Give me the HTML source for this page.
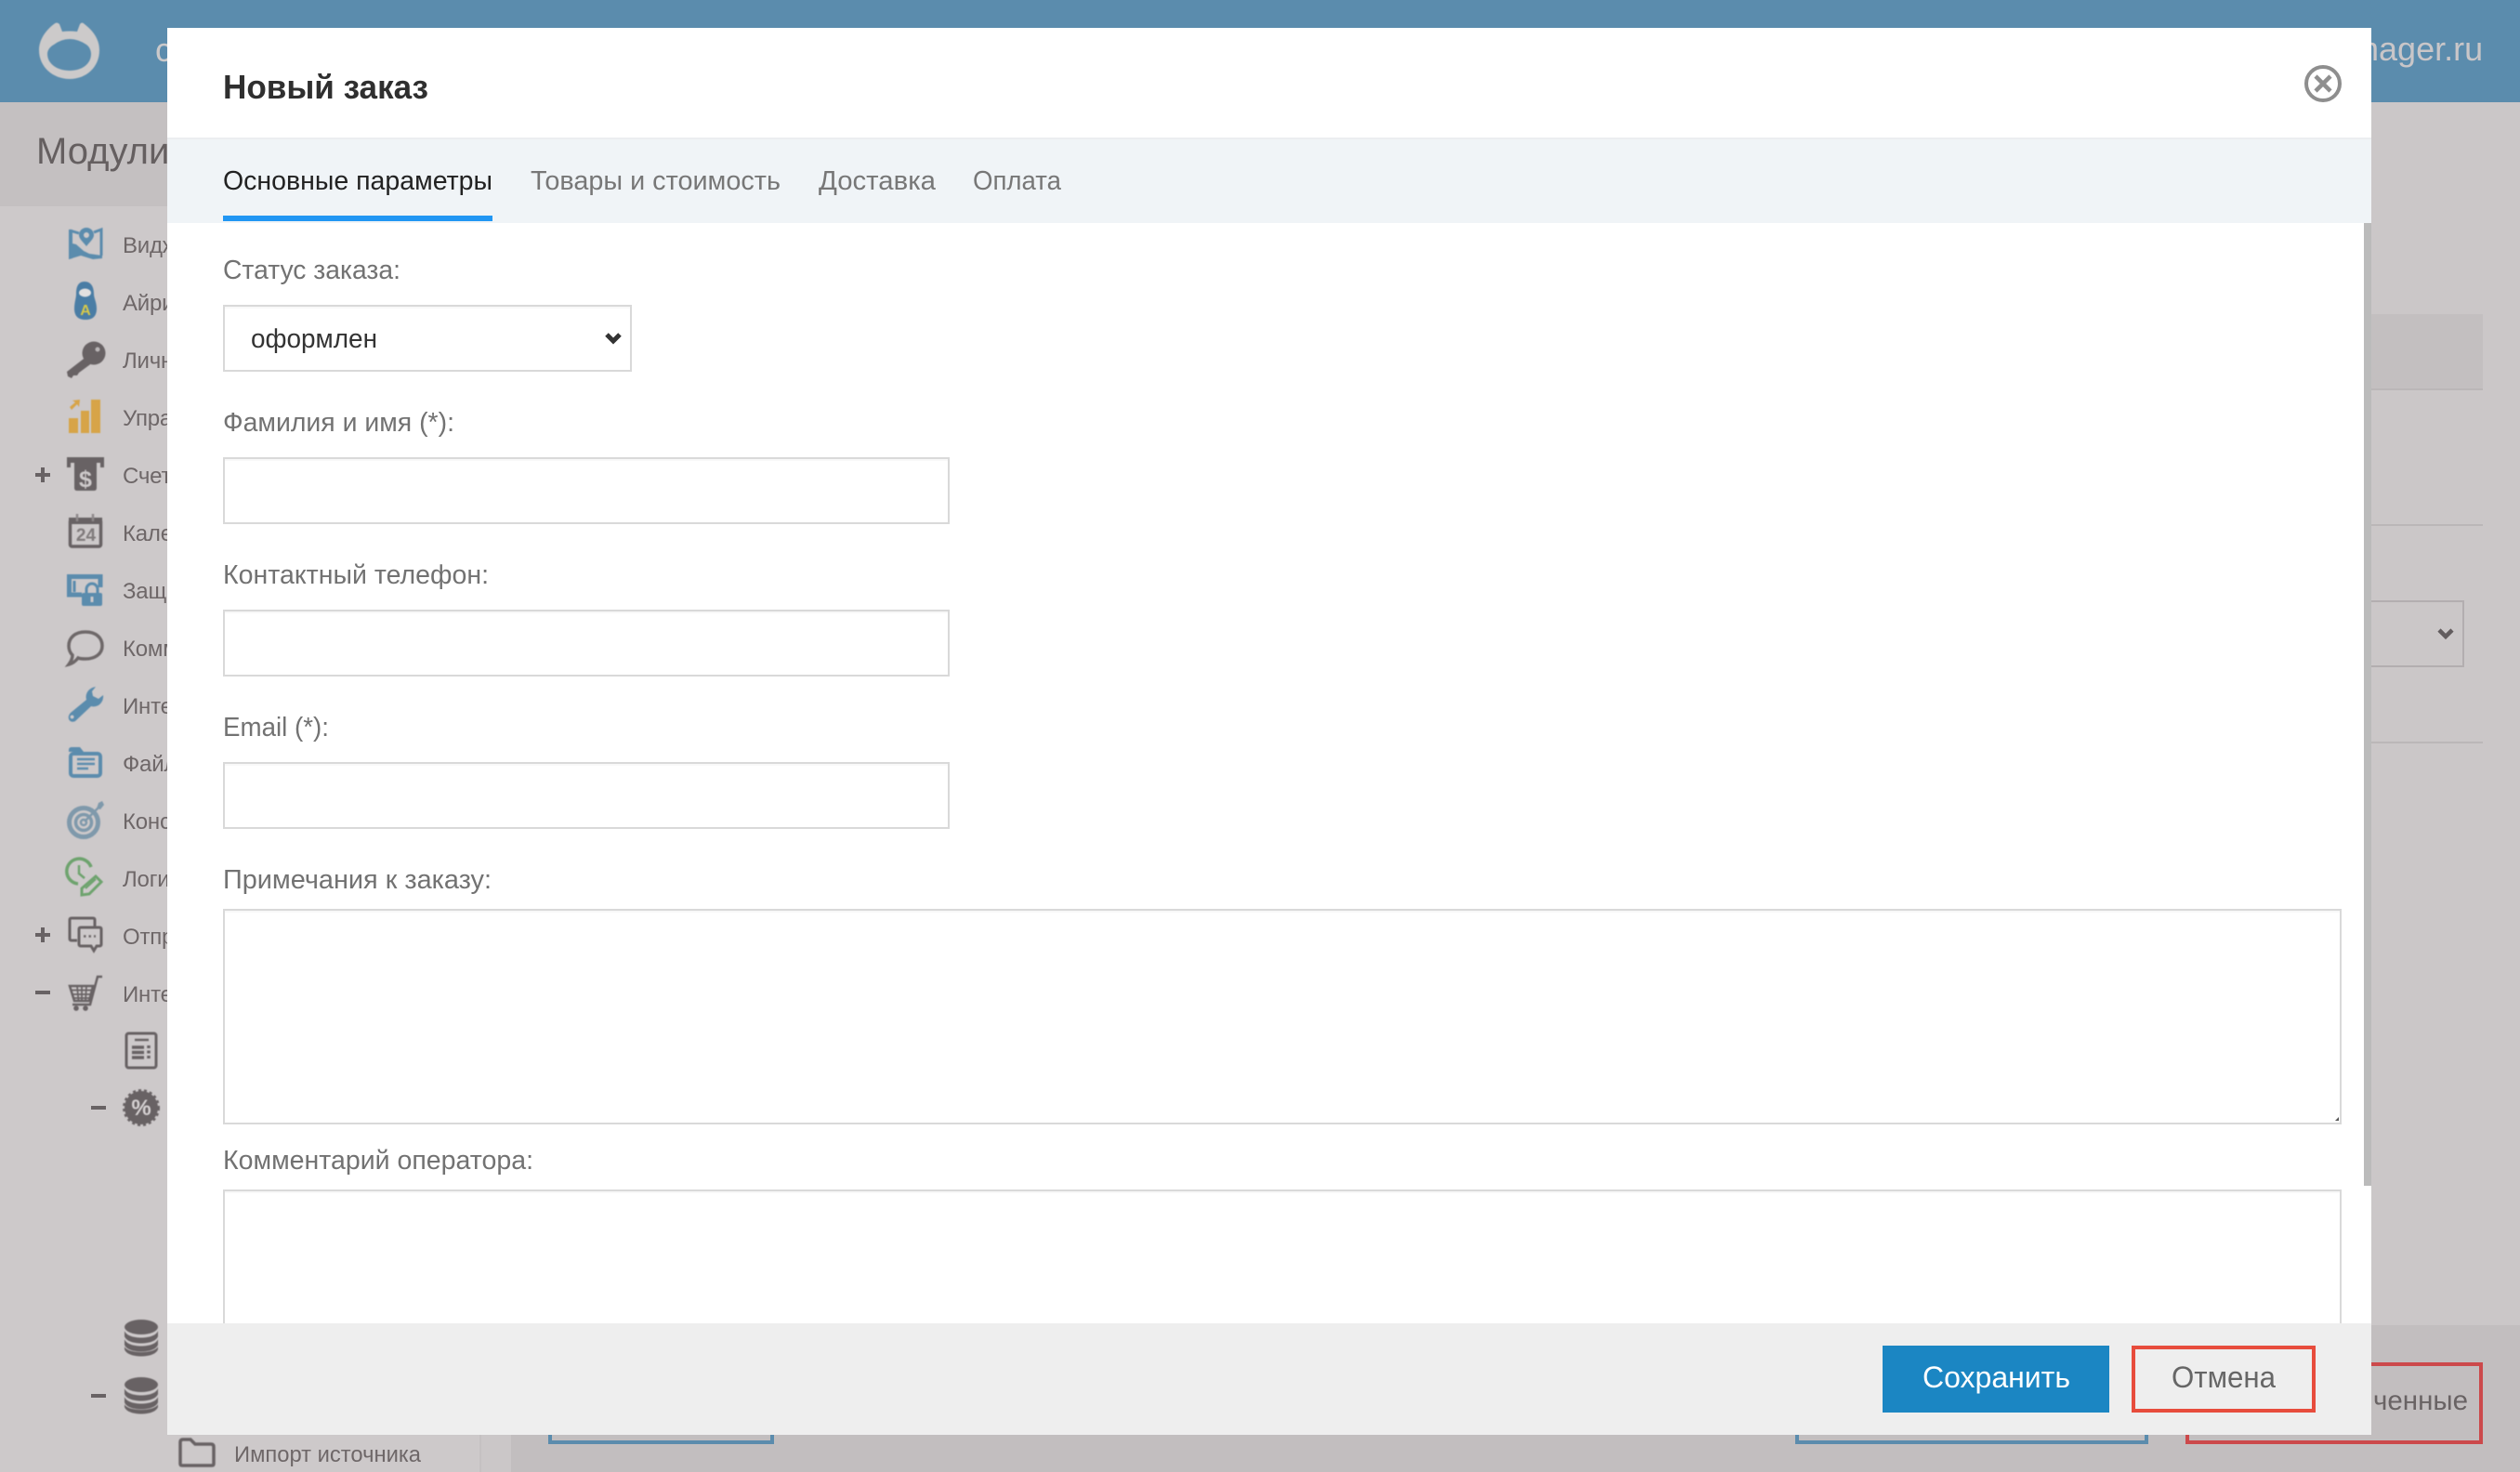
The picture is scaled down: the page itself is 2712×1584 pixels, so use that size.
<!DOCTYPE html>
<html lang="ru">
<head>
<meta charset="utf-8">
<title>Новый заказ</title>
<style>
html,body{margin:0;padding:0;width:2712px;height:1584px;overflow:hidden;background:#cbc7c8}
svg{display:block;position:absolute;left:0;top:0}
text{font-family:"Liberation Sans","Noto Sans CJK SC",sans-serif}
.side{font-size:24px;fill:#6e6768;letter-spacing:-.2px}
.lab{font-size:29px;fill:#727272}
.tab{font-size:29px;fill:#777}
.fld{fill:#fff;stroke:#d9d9d9;stroke-width:2}
.soft{filter:blur(.6px)}
</style>
</head>
<body>
<svg width="2712" height="1584" viewBox="0 0 2712 1584" xmlns="http://www.w3.org/2000/svg">
<!-- page background -->
<rect width="2712" height="1584" fill="#cbc7c8"/>
<rect width="2712" height="110" fill="#5b8cad"/>
<rect y="110" width="180" height="112" fill="#c4c0c1"/>
<rect x="0" y="222" width="517" height="1362" fill="#cdc9ca"/>
<rect x="550" y="1426" width="2162" height="158" fill="#c2bebf"/>
<rect x="516" y="1544" width="2" height="40" fill="#c5c1c2"/>

<!-- logo -->
<path class="soft" fill="#cccaca" fill-rule="evenodd" d="M42 54 C42 42 50 32 58 26 Q61 23 64 26 L67 34 Q75 33 83 34 L86 26 Q88 23 91 26 C100 33 107 42 107 54 C107 72 93 85 75 85 C57 85 42 72 42 54 Z M58 48 Q66 42 75 42 Q84 42 93 48 C96 50 98 54 98 58 C98 69 88 76 75 76 C62 76 51 69 51 58 C51 54 54 50 58 48 Z"/>
<text x="167" y="66" font-size="36" fill="#cbc9ca">с</text>
<text x="2490" y="65" font-size="36" fill="#c9c6c8">manager.ru</text>
<text x="39" y="176" font-size="40" fill="#655f60">Модули</text>

<!-- sidebar text -->
<text class="side" x="132" y="272">Виджеты</text>
<text class="side" x="132" y="334">Айрин</text>
<text class="side" x="132" y="396">Личный</text>
<text class="side" x="132" y="458">Управление</text>
<text class="side" x="132" y="520">Счета</text>
<text class="side" x="132" y="582">Календарь</text>
<text class="side" x="132" y="644">Защита</text>
<text class="side" x="132" y="706">Комментарии</text>
<text class="side" x="132" y="768">Интеграции</text>
<text class="side" x="132" y="830">Файлы</text>
<text class="side" x="132" y="892">Конструктор</text>
<text class="side" x="132" y="954">Логи</text>
<text class="side" x="132" y="1016">Отправка</text>
<text class="side" x="132" y="1078">Интернет</text>
<text x="252" y="1573" font-size="24" fill="#6e6768" textLength="201" lengthAdjust="spacingAndGlyphs">Импорт источника</text>

<g class="soft">
<!-- map -->
<path d="M75 248 L85 251 M101 250 L109 247 V275" fill="none" stroke="#5b8cad" stroke-width="3"/>
<path d="M74 247 H78 V278 L74 279 Z" fill="#5b8cad"/>
<path d="M74 261 L82 263 L90 270 L96 273 L110 275 V278 L100 279 L87 275 L74 279 Z" fill="#5b8cad"/>
<path fill-rule="evenodd" fill="#5b8cad" d="M93 245 C88 245 85 249 85 253 C85 257 90 261 93 265 C96 261 101 257 101 253 C101 249 98 245 93 245 Z M93 250 A3 3 0 1 1 93 256 A3 3 0 1 1 93 250 Z"/>
<!-- matryoshka -->
<path d="M91 303 C84 303 82 309 82 316 C82 321 80 325 80 332 C80 340 84 344 92 344 C100 344 104 340 104 332 C104 325 101 321 101 316 C101 309 98 303 91 303 Z" fill="#4a7da5"/>
<ellipse cx="91.500" cy="315" rx="6.500" ry="4.500" fill="#e2e0e0"/>
<text x="92" y="339" font-size="16" font-weight="bold" fill="#d6c84a" text-anchor="middle">A</text>
<!-- key -->
<g fill="#686264">
<circle cx="101" cy="380" r="12.500"/>
<path d="M94 383 L100 390 L85 401 L83 404 L79 404 L77 407 L73 405 L72 400 Z"/>
</g>
<circle cx="105" cy="376" r="2.500" fill="#b9b5b6"/>
<!-- chart -->
<g fill="#d7a448">
<rect x="74" y="450" width="10" height="16"/>
<rect x="87" y="442" width="9" height="24"/>
<rect x="98" y="430" width="10" height="36"/>
<path d="M75 438 L81 433 L78 431 L86 430 L85 438 L83 435 L77 441 Z"/>
</g>
<!-- atm -->
<g fill="#686264">
<path d="M72 492 H112 V503 H108 V498 H76 V503 H72 Z"/>
<path d="M80 497 H104 V525 Q104 528 101 528 H83 Q80 528 80 525 Z"/>
</g>
<text x="92" y="524" font-size="25" font-weight="bold" fill="#cdc9ca" text-anchor="middle">$</text>
<!-- calendar -->
<rect x="75.500" y="559" width="33" height="29" rx="2" fill="none" stroke="#686264" stroke-width="3.500"/>
<rect x="74" y="557" width="36" height="7" fill="#686264"/>
<path d="M83 553 V561 M100 553 V561" stroke="#8d8889" stroke-width="2.500"/>
<text x="92.500" y="582" font-size="19" font-weight="bold" fill="#807b7c" text-anchor="middle">24</text>
<!-- lock -->
<path d="M88 640 H74.500 V620.500 H108 V632" fill="none" stroke="#5b8cad" stroke-width="5"/>
<path d="M80 625 V637" stroke="#5b8cad" stroke-width="3"/>
<rect x="88" y="638" width="22" height="14" rx="2" fill="#5b8cad"/>
<path d="M93 639 V634 A6 6 0 0 1 105 634 V639" fill="none" stroke="#5b8cad" stroke-width="3"/>
<rect x="97.500" y="642" width="3" height="6" fill="#cdc9ca"/>
<!-- comment -->
<path d="M92 680 C103 680 110 686 110 695 C110 704 102 709 92 709 C89 709 86 709 84 708 C81 712 78 714 74 715 C77 711 78 708 78 705 C75 702 74 699 74 695 C74 686 81 680 92 680 Z" fill="none" stroke="#6e6869" stroke-width="3.500"/>
<!-- wrench -->
<path fill="#5b8cad" fill-rule="evenodd" d="M103 739 C96 740 91 746 93 753 L76 767 C71 772 75 779 81 776 L98 760 C105 762 112 756 111 748 L106 752 L100 749 L99 744 Z M77.500 769.500 A2 2 0 1 0 77.600 769.500 Z"/>
<!-- file folder -->
<rect x="76" y="811" width="32" height="24" rx="3" fill="none" stroke="#5b8cad" stroke-width="4"/>
<path d="M74 813 V807 Q74 804 77 804 H86 L90 809 H74 Z" fill="#5b8cad"/>
<path d="M83 817 H102 M83 822 H102 M83 827 H95" stroke="#5b8cad" stroke-width="2.500"/>
<!-- target -->
<g fill="none" stroke="#7f99ab">
<circle cx="90" cy="885" r="15.500" stroke-width="5"/>
<circle cx="90" cy="885" r="8.500" stroke-width="3.500"/>
<circle cx="90" cy="885" r="3" stroke-width="2.500"/>
<path d="M91 884 L107 868" stroke-width="2.500"/>
</g>
<path d="M104 870 L106 864 L110 862 L112 866 L108 871 Z" fill="#7f99ab"/>
<!-- logs -->
<g fill="none" stroke="#6ea36e">
<path d="M84 951 A13.500 13.500 0 1 1 98 933" stroke-width="3.500"/>
<path d="M85 931 V940 L91 945" stroke-width="2.500"/>
<path d="M88 956 L103 943 L109 949 L96 962 L88 963 Z" stroke-width="3"/>
<path d="M92 956 L103 946" stroke-width="2"/>
</g>
<!-- chats -->
<path d="M83 1012 H77 Q75 1012 75 1010 V990 Q75 988 77 988 H100 Q102 988 102 990 V997" fill="none" stroke="#686264" stroke-width="3"/>
<path d="M87 998 H107 Q109 998 109 1000 V1016 Q109 1018 107 1018 H104 L101 1023 L98 1018 H87 Q85 1018 85 1016 V1000 Q85 998 87 998 Z" fill="none" stroke="#686264" stroke-width="3"/>
<path d="M90 1007.500 H103" stroke="#6e6869" stroke-width="2.500" stroke-dasharray="2.500 3"/>
<!-- cart -->
<g fill="none" stroke="#686264">
<path d="M75 1061 H100 L96 1077 H80 Z" stroke-width="2.500"/>
<path d="M77 1065.500 H99 M78 1070 H97 M79 1074 H97 M83 1061 L84.500 1077 M88 1061 V1077 M93 1061 L92 1077" stroke-width="1.700"/>
<path d="M110 1051 H105 L97 1081 H78" stroke-width="2.500"/>
</g>
<circle cx="82" cy="1085" r="2.800" fill="#686264"/>
<circle cx="92" cy="1085" r="2.800" fill="#686264"/>
<!-- calculator -->
<rect x="136" y="1112" width="32" height="37" rx="2.500" fill="none" stroke="#686264" stroke-width="3"/>
<path d="M145 1119 H160" stroke="#686264" stroke-width="2.500"/>
<path d="M142 1127 H155 M142 1132.500 H155 M142 1138 H155" stroke="#686264" stroke-width="3.500"/>
<path d="M160 1125 V1141" stroke="#686264" stroke-width="3.500" stroke-dasharray="3 2.500"/>
<!-- badge -->
<circle cx="152" cy="1192" r="18" fill="#686264"/>
<circle cx="152" cy="1192" r="18.500" fill="none" stroke="#686264" stroke-width="3" stroke-dasharray="3 3"/>
<text x="152" y="1200" font-size="24" font-weight="bold" fill="#d6d2d3" text-anchor="middle">%</text>
<!-- db icons -->
<g fill="#686264">
<ellipse cx="152" cy="1428" rx="18" ry="8"/>
<path d="M134 1432 C137 1442 167 1442 170 1432 V1438 C167 1448 137 1448 134 1438 Z"/>
<path d="M134 1441 C137 1451 167 1451 170 1441 V1447 C167 1457 137 1457 134 1447 Z"/>
<path d="M134 1449 C137 1457 167 1457 170 1449 V1452 C167 1462 137 1462 134 1452 Z"/>
</g>
<g fill="#686264">
<ellipse cx="152" cy="1490" rx="18" ry="8"/>
<path d="M134 1494 C137 1504 167 1504 170 1494 V1500 C167 1510 137 1510 134 1500 Z"/>
<path d="M134 1503 C137 1513 167 1513 170 1503 V1509 C167 1519 137 1519 134 1509 Z"/>
<path d="M134 1511 C137 1519 167 1519 170 1511 V1514 C167 1524 137 1524 134 1514 Z"/>
</g>
<!-- import folder -->
<path d="M196 1577 Q194 1577 194 1575 V1552 Q194 1549 197 1549 H205 L210 1554 H227 Q230 1554 230 1557 V1575 Q230 1577 228 1577 Z" fill="none" stroke="#686264" stroke-width="3.500"/>
</g>
<!-- expanders -->
<path d="M38 511 H54 M46 503 V519" stroke="#686264" stroke-width="4"/>
<path d="M38 1006 H54 M46 998 V1014" stroke="#686264" stroke-width="4"/>
<path d="M38 1068 H54" stroke="#686264" stroke-width="4"/>
<path d="M98 1192 H114" stroke="#686264" stroke-width="4"/>
<path d="M98 1502 H114" stroke="#686264" stroke-width="4"/>

<!-- right background -->
<rect x="2552" y="338" width="120" height="80" fill="#c3bfc0"/>
<rect x="2552" y="418" width="120" height="2" fill="#bbb7b8"/>
<rect x="2552" y="564" width="120" height="2" fill="#bbb7b8"/>
<rect x="2552" y="798" width="120" height="2" fill="#bbb7b8"/>
<rect x="2500" y="647" width="151" height="70" fill="none" stroke="#b3aeb0" stroke-width="2"/>
<path d="M2625 678 L2632 685 L2639 678" fill="none" stroke="#625c5e" stroke-width="4.500"/>
<!-- bottom buttons -->
<rect x="592" y="1500" width="239" height="52" fill="none" stroke="#5b8cad" stroke-width="4"/>
<rect x="1934" y="1500" width="376" height="52" fill="none" stroke="#5b8cad" stroke-width="4"/>
<rect x="2354" y="1468" width="316" height="84" fill="none" stroke="#cc494b" stroke-width="4"/>
<text x="2554" y="1517" font-size="30" fill="#696364" textLength="102" lengthAdjust="spacingAndGlyphs">ченные</text>

<!-- modal -->
<rect x="180" y="30" width="2372" height="118" fill="#fff"/>
<rect x="180" y="148" width="2372" height="2" fill="#eceef0"/>
<rect x="180" y="150" width="2372" height="90" fill="#f0f4f7"/>
<rect x="180" y="240" width="2364" height="1184" fill="#fff"/>
<rect x="2544" y="240" width="8" height="1036" fill="#bbb"/>
<rect x="2544" y="1276" width="8" height="148" fill="#fff"/>
<rect x="180" y="1424" width="2372" height="120" fill="#eee"/>

<text x="240" y="106" font-size="36" font-weight="bold" fill="#2f2f2f" textLength="221" lengthAdjust="spacingAndGlyphs">Новый заказ</text>
<g fill="none" stroke="#8e8e8e">
<circle cx="2500" cy="90" r="18" stroke-width="4"/>
<path d="M2492 82 L2508 98 M2508 82 L2492 98" stroke-width="4.500"/>
</g>

<text class="tab" x="240" y="204" style="fill:#222" textLength="290" lengthAdjust="spacingAndGlyphs">Основные параметры</text>
<rect x="240" y="232" width="290" height="6" fill="#2196f3"/>
<text class="tab" x="571" y="204" textLength="269" lengthAdjust="spacingAndGlyphs">Товары и стоимость</text>
<text class="tab" x="881" y="204" textLength="126" lengthAdjust="spacingAndGlyphs">Доставка</text>
<text class="tab" x="1047" y="204" textLength="95" lengthAdjust="spacingAndGlyphs">Оплата</text>

<text class="lab" x="240" y="300" textLength="191" lengthAdjust="spacingAndGlyphs">Статус заказа:</text>
<rect class="fld" x="241" y="329" width="438" height="70"/>
<rect x="242" y="330" width="436" height="2" fill="#f8f8f8"/>
<text x="270" y="374" font-size="29" fill="#333" textLength="136" lengthAdjust="spacingAndGlyphs">оформлен</text>
<path d="M653 360 L660 367 L667 360" fill="none" stroke="#333" stroke-width="5"/>

<text class="lab" x="240" y="464" textLength="249" lengthAdjust="spacingAndGlyphs">Фамилия и имя (*):</text>
<rect class="fld" x="241" y="493" width="780" height="70"/>
<rect x="242" y="494" width="778" height="2" fill="#f8f8f8"/>

<text class="lab" x="240" y="628" textLength="286" lengthAdjust="spacingAndGlyphs">Контактный телефон:</text>
<rect class="fld" x="241" y="657" width="780" height="70"/>
<rect x="242" y="658" width="778" height="2" fill="#f8f8f8"/>

<text class="lab" x="240" y="792" textLength="114" lengthAdjust="spacingAndGlyphs">Email (*):</text>
<rect class="fld" x="241" y="821" width="780" height="70"/>
<rect x="242" y="822" width="778" height="2" fill="#f8f8f8"/>

<text class="lab" x="240" y="956" textLength="289" lengthAdjust="spacingAndGlyphs">Примечания к заказу:</text>
<rect class="fld" x="241" y="979" width="2278" height="230"/>
<rect x="242" y="980" width="2276" height="2" fill="#f8f8f8"/>
<path d="M2513 1206 L2517 1202 V1206 Z" fill="#555"/>

<text class="lab" x="240" y="1258" textLength="334" lengthAdjust="spacingAndGlyphs">Комментарий оператора:</text>
<path d="M241 1424 V1281 H2519 V1424" class="fld"/>
<rect x="242" y="1282" width="2276" height="2" fill="#f8f8f8"/>

<!-- footer buttons -->
<rect x="2026" y="1448" width="244" height="72" fill="#1b86c3"/>
<text x="2069" y="1493" font-size="32" fill="#fff" textLength="159" lengthAdjust="spacingAndGlyphs">Сохранить</text>
<rect x="2296" y="1450" width="194" height="68" fill="none" stroke="#e74c3c" stroke-width="4"/>
<text x="2337" y="1493" font-size="32" fill="#666" textLength="112" lengthAdjust="spacingAndGlyphs">Отмена</text>
</svg>
</body>
</html>
